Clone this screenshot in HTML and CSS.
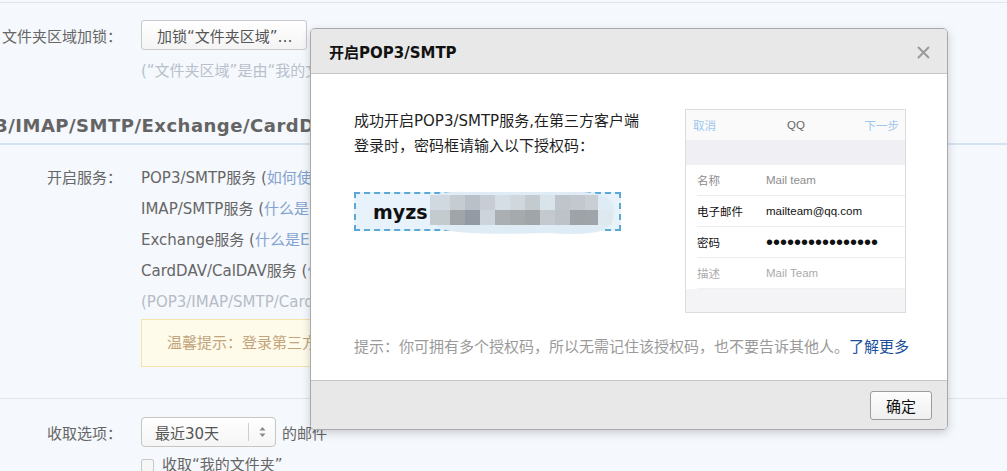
FILE: index.html
```html
<!DOCTYPE html>
<html lang="zh-CN">
<head>
<meta charset="utf-8">
<title>设置 - 账户</title>
<link rel="stylesheet" href="styles.css">
</head>
<body>
<div class="page">
  <div class="topline"></div>

  <div class="row row-lock">
    <div class="label">文件夹区域加锁：</div>
    <div class="value"><button class="btn">加锁“文件夹区域”…</button></div>
  </div>
  <div class="row row-note">
    <div class="label"></div>
    <div class="value note">(“文件夹区域”是由“我的文件夹”中的文件夹组成)</div>
  </div>

  <h2 class="section-title"><span>POP3/IMAP/SMTP/Exchange/CardDAV/CalDAV服务</span></h2>

  <div class="row row-services">
    <div class="label">开启服务：</div>
    <div class="value">
      <div class="svc">POP3/SMTP服务 (<a class="lnk">如何使用 Foxmail 等软件收发邮件？</a>)</div>
      <div class="svc">IMAP/SMTP服务 (<a class="lnk">什么是 IMAP，它又是如何设置？</a>)</div>
      <div class="svc">Exchange服务 (<a class="lnk">什么是Exchange，它又是如何设置？</a>)</div>
      <div class="svc">CardDAV/CalDAV服务 (<a class="lnk">什么是CardDAV/CalDAV？</a>)</div>
      <div class="svc muted">(POP3/IMAP/SMTP/CardDAV/CalDAV服务均支持SSL连接。如何设置？)</div>
      <div class="tip">温馨提示：登录第三方客户端时，密码框请输入“授权码”进行验证。</div>
    </div>
  </div>

  <div class="divider"></div>

  <div class="row row-fetch">
    <div class="label">收取选项：</div>
    <div class="value fetch">
      <div class="select">
        <span class="select-text">最近30天</span>
        <span class="select-sep"></span>
        <svg class="select-arrows" width="7" height="12" viewBox="0 0 7 12"><path d="M3.5 1 L6.5 4.5 H0.5 Z M3.5 11 L6.5 7.5 H0.5 Z" fill="#8a8a8a"/></svg>
      </div>
      <span class="fetch-after">的邮件</span>
    </div>
  </div>
  <div class="row row-check">
    <div class="label"></div>
    <div class="value check">
      <span class="checkbox"></span>
      <span>收取“我的文件夹”</span>
    </div>
  </div>
</div>

<div class="modal">
  <div class="modal-head">
    <div class="modal-title">开启POP3/SMTP</div>
    <svg class="modal-close" width="13" height="13" viewBox="0 0 13 13"><path d="M1 1 L12 12 M12 1 L1 12" stroke="#9a9a9a" stroke-width="2" fill="none"/></svg>
  </div>
  <div class="modal-body">
    <div class="body-main">
      <div class="intro-col">
        <p class="intro">成功开启POP3/SMTP服务,在第三方客户端<br>登录时，密码框请输入以下授权码：</p>
        <div class="code">
          <span class="code-text">myzs</span>
          <svg class="code-blur" width="188" height="46" viewBox="0 0 188 46">
            <path d="M6 6 Q14 1 40 2 L150 2 Q184 2 186 18 Q188 34 176 40 Q160 46 120 43 Q60 45 30 42 Q4 40 2 24 Q0 10 6 6 Z" fill="#dfecf5"/>
            <g>
              <rect x="2" y="5" width="20" height="15" fill="#d0d9df"/>
              <rect x="22" y="5" width="15" height="15" fill="#c5cdd2"/>
              <rect x="37" y="5" width="15" height="15" fill="#bac0c7"/>
              <rect x="52" y="5" width="15" height="15" fill="#c7ccd5"/>
              <rect x="67" y="5" width="15" height="15" fill="#d5dee4"/>
              <rect x="82" y="5" width="15" height="15" fill="#d0d8dd"/>
              <rect x="97" y="5" width="15" height="15" fill="#c4cbcf"/>
              <rect x="112" y="5" width="15" height="15" fill="#d8e3ea"/>
              <rect x="127" y="5" width="15" height="15" fill="#bfc5cb"/>
              <rect x="142" y="5" width="15" height="15" fill="#c2c8ce"/>
              <rect x="157" y="5" width="13" height="15" fill="#c8ced4"/>
              <rect x="2" y="20" width="20" height="15" fill="#c4cbcf"/>
              <rect x="22" y="20" width="15" height="15" fill="#9fa5a8"/>
              <rect x="37" y="20" width="15" height="15" fill="#939aa3"/>
              <rect x="52" y="20" width="15" height="15" fill="#cdd4db"/>
              <rect x="67" y="20" width="15" height="15" fill="#aaafb4"/>
              <rect x="82" y="20" width="15" height="15" fill="#a5aaad"/>
              <rect x="97" y="20" width="15" height="15" fill="#a0a5a9"/>
              <rect x="112" y="20" width="15" height="15" fill="#c4c9d0"/>
              <rect x="127" y="20" width="15" height="15" fill="#bcc2c8"/>
              <rect x="142" y="20" width="15" height="15" fill="#9da3a6"/>
              <rect x="157" y="20" width="13" height="15" fill="#9fa4ab"/>
              <rect x="170" y="20" width="14" height="15" fill="#dde8ef"/>
            </g>
          </svg>
        </div>
      </div>
      <div class="phone">
        <div class="ph-head">
          <span class="ph-blue ph-left">取消</span>
          <span class="ph-title">QQ</span>
          <span class="ph-blue ph-right">下一步</span>
        </div>
        <div class="ph-band"></div>
        <div class="ph-row"><span class="ph-label ph-gray">名称</span><span class="ph-gray">Mail team</span></div>
        <div class="ph-row"><span class="ph-label ph-dark">电子邮件</span><span class="ph-dark">mailteam@qq.com</span></div>
        <div class="ph-row"><span class="ph-label ph-dark">密码</span><span class="ph-dots">••••••••••••••••</span></div>
        <div class="ph-row ph-last"><span class="ph-label ph-light">描述</span><span class="ph-light">Mail Team</span></div>
        <div class="ph-foot"></div>
      </div>
    </div>
    <p class="hint">提示：你可拥有多个授权码，所以无需记住该授权码，也不要告诉其他人。<a class="more">了解更多</a></p>
  </div>
  <div class="modal-foot">
    <button class="ok">确定</button>
  </div>
</div>
</body>
</html>
```

FILE: styles.css
```css
html, body {
  margin: 0;
  padding: 0;
  height: 471px;
  overflow: hidden;
}

body {
  position: relative;
  background: #f5f8fc;
  font-family: "DejaVu Sans", "Noto Sans CJK SC", sans-serif;
  font-size: 15px;
  color: #666;
}

.page {
  width: 1007px;
}

.topline {
  height: 1px;
  margin-top: 2px;
  background: #dfe5ee;
}

.row {
  display: flex;
  align-items: flex-start;
}

.label {
  width: 122px;
  flex: none;
  text-align: right;
  white-space: nowrap;
  color: #666;
}

.value {
  margin-left: 19px;
  white-space: nowrap;
}

.row-lock {
  margin-top: 17px;
  height: 30px;
  align-items: center;
}

.btn {
  box-sizing: border-box;
  width: 166px;
  height: 30px;
  padding: 0 15px;
  border: 1px solid #c9c9c9;
  border-radius: 3px;
  background: linear-gradient(#ffffff, #f4f4f4);
  font: inherit;
  color: #555;
  text-align: left;
  white-space: nowrap;
}

.row-note {
  margin-top: 11px;
  line-height: 20px;
}

.note {
  color: #b8c0cc;
}

.section-title {
  margin: 33px 0 0;
  padding-bottom: 5px;
  border-bottom: 2px solid #d6e2ef;
  font-size: 18px;
  font-weight: bold;
  line-height: 24px;
  letter-spacing: 0.5px;
  color: #646464;
  white-space: nowrap;
}

.section-title span {
  display: inline-block;
  margin-left: -48px;
}

.row-services {
  margin-top: 18px;
}

.row-services .label {
  line-height: 31px;
}

.svc {
  line-height: 31px;
  color: #666;
}

.lnk {
  color: #84a3cf;
}

.svc.muted {
  color: #b6bcc6;
}

.tip {
  box-sizing: border-box;
  width: 720px;
  margin-top: 1px;
  padding: 13px 25px;
  border: 1px solid #f5e3ae;
  background: #fffbea;
  line-height: 20px;
  color: #c2a47c;
}

.divider {
  height: 1px;
  margin-top: 31px;
  background: #e1e5ea;
}

.row-fetch {
  margin-top: 18px;
  height: 30px;
  align-items: center;
}

.fetch {
  display: flex;
  align-items: center;
}

.select {
  box-sizing: border-box;
  width: 135px;
  height: 30px;
  display: flex;
  align-items: center;
  padding-left: 13px;
  border: 1px solid #c6c6c6;
  border-radius: 4px;
  background: linear-gradient(#ffffff, #f5f5f5);
  color: #555;
}

.select-text {
  width: 93px;
}

.select-sep {
  width: 1px;
  height: 18px;
  background: #cfcfcf;
}

.select-arrows {
  margin-left: 10px;
}

.fetch-after {
  margin-left: 6px;
  color: #666;
}

.row-check {
  margin-top: 8px;
  line-height: 20px;
}

.check {
  display: flex;
  align-items: center;
  color: #666;
}

.checkbox {
  box-sizing: border-box;
  width: 13px;
  height: 13px;
  margin-right: 8px;
  border: 1px solid #c8c8c8;
  border-radius: 2px;
  background: #f6f6f6;
}

/* modal */
.modal {
  position: absolute;
  left: 310px;
  top: 28px;
  width: 636px;
  border: 1px solid #a9a9a9;
  border-radius: 5px;
  background: #fff;
  box-shadow: 0 3px 10px rgba(0, 0, 0, 0.18);
  overflow: hidden;
  color: #222;
}

.modal-head {
  height: 44px;
  display: flex;
  align-items: center;
  justify-content: space-between;
  padding: 0 17px 0 18px;
  background: #e8e8e8;
  border-bottom: 1px solid #c6c6c6;
}

.modal-title {
  font-size: 15px;
  font-weight: bold;
  color: #111;
}

.modal-close {
  display: block;
  margin-top: 2px;
}

.modal-body {
  box-sizing: border-box;
  height: 306px;
  padding: 35px 41px 0 43px;
}

.body-main {
  display: flex;
  justify-content: space-between;
}

.intro {
  margin: 0;
  line-height: 25px;
  color: #1f1f1f;
}

.code {
  position: relative;
  box-sizing: border-box;
  width: 267px;
  height: 39px;
  margin-top: 33px;
  padding-left: 17px;
  border: 2px dashed #5aa8d3;
  background: #e7f2fa;
  display: flex;
  align-items: center;
}

.code-text {
  font-size: 19px;
  font-weight: bold;
  color: #111;
}

.code-blur {
  position: absolute;
  left: 72px;
  top: -4px;
}

.phone {
  box-sizing: border-box;
  width: 221px;
  height: 204px;
  display: flex;
  flex-direction: column;
  border: 1px solid #dcdcdc;
  background: #fff;
  font-family: "Liberation Sans", "Noto Sans CJK SC", sans-serif;
  font-size: 11.5px;
}

.ph-head {
  height: 30px;
  flex: none;
  display: grid;
  grid-template-columns: 1fr auto 1fr;
  align-items: center;
  padding: 0 6px 0 7px;
  background: #fafafa;
}

.ph-blue {
  color: #9cc7ee;
}

.ph-right {
  text-align: right;
}

.ph-title {
  color: #666;
}

.ph-band {
  height: 25px;
  flex: none;
  background: #f0f0f4;
}

.ph-row {
  height: 30px;
  flex: none;
  margin-left: 11px;
  display: flex;
  align-items: center;
  border-bottom: 1px solid #ececec;
}

.ph-row.ph-last {
  border-bottom: 1px solid #f0f0f0;
}

.ph-label {
  width: 69px;
  flex: none;
}

.ph-gray {
  color: #8c8c8c;
}

.ph-dark {
  color: #111;
}

.ph-light {
  color: #ababab;
}

.ph-dots {
  font-size: 20px;
  line-height: 10px;
  color: #111;
  letter-spacing: 0;
}

.ph-foot {
  flex: 1;
  background: #f4f4f6;
}

.hint {
  margin: 22px 0 0;
  line-height: 25px;
  color: #9a9a9a;
  white-space: nowrap;
}

.more {
  color: #1b4f9b;
}

.modal-foot {
  height: 48px;
  display: flex;
  align-items: center;
  justify-content: flex-end;
  padding-right: 15px;
  border-top: 1px solid #c6c6c6;
  background: #e8e8e8;
}

.ok {
  box-sizing: border-box;
  width: 62px;
  height: 29px;
  padding: 0;
  border: 1px solid #9c9c9c;
  border-radius: 3px;
  background: linear-gradient(#fdfdfd, #efefef);
  font: inherit;
  font-size: 15px;
  color: #111;
}
```
